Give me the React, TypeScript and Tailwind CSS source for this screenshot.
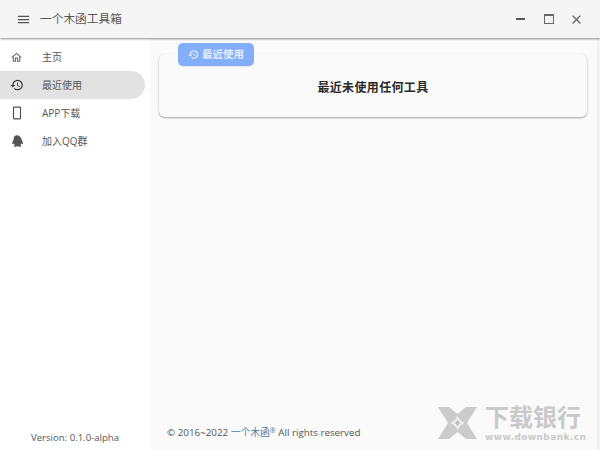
const font = { fontFamily: '"Open Sans", "Noto Sans CJK SC", sans-serif' };

function Icon({ d, size, color = "#555" }: { d: string; size: number; color?: string }) {
  return (
    <svg viewBox="0 0 24 24" width={size} height={size} fill={color}>
      <path d={d} />
    </svg>
  );
}

const HISTORY = "M13 3a9 9 0 0 0-9 9H1l3.890 3.890.07.14L9 12H6c0-3.870 3.130-7 7-7s7 3.130 7 7-3.130 7-7 7c-1.930 0-3.680-.79-4.940-2.060l-1.420 1.420A8.954 8.954 0 0 0 13 21a9 9 0 0 0 0-18zm-1 5v5l4.280 2.540.72-1.210-3.500-2.080V8H12z";
const HOME = "M12 5.690l5 4.500V18h-2v-6H9v6H7v-7.810l5-4.500M12 3L2 12h3v8h6v-6h2v6h6v-8h3L12 3z";
const PHONE = "M17 1.010L7 1c-1.100 0-2 .9-2 2v18c0 1.100.9 2 2 2h10c1.100 0 2-.9 2-2V3c0-1.100-.9-1.990-2-1.990zM17 21H7V3h10v18z";
const MENU = "M3 18h18v-2H3v2zm0-5h18v-2H3v2zm0-7v2h18V6H3z";
const CLOSE = "M19 6.410L17.590 5 12 10.590 6.410 5 5 6.410 10.590 12 5 17.590 6.410 19 12 13.410 17.590 19 19 17.590 13.410 12z";
const QQ = "M12 2c-3.600 0-5.800 2.800-5.800 6.200v1.700c-1 1.600-2.400 4-2.400 6 0 1.200.4 1.700.8 1.700.5 0 1.200-.8 1.700-1.700.3 1.300 1 2.400 1.900 3.200-1.100.4-2 .9-2 1.600 0 .8 1.600 1.300 3.500 1.300 1.200 0 2.200-.3 2.800-.8h1c.6.500 1.600.8 2.800.8 1.900 0 3.500-.5 3.500-1.300 0-.7-.9-1.200-2-1.600.9-.8 1.600-1.900 1.900-3.200.5.9 1.200 1.700 1.700 1.700.4 0 .8-.5.8-1.700 0-2-1.400-4.400-2.400-6V8.200C17.800 4.800 15.600 2 12 2z";

function Row({ icon, label, active }: { icon: React.ReactNode; label: string; active?: boolean }) {
  return (
    <div className={`flex h-[28px] w-[145px] items-center rounded-r-[14px] ${active ? "bg-[#e2e2e2]" : ""}`}>
      <div className="flex w-[33px] shrink-0 justify-center">{icon}</div>
      <span className="ml-[9px] text-[10px] leading-none text-[#555]">{label}</span>
    </div>
  );
}

export default function App() {
  return (
    <div className="relative flex h-[450px] w-[600px] flex-col overflow-hidden bg-white" style={font}>
      <header className="relative z-10 flex h-[38px] shrink-0 items-center bg-[#f5f5f5] shadow-[0_1px_2px_rgba(0,0,0,0.45)]">
        <div className="ml-[16px] flex">
          <Icon d={MENU} size={15} color="#555" />
        </div>
        <span className="ml-[9px] text-[11.7px] leading-none text-[#555]">一个木函工具箱</span>
        <div className="ml-auto flex items-center pr-[16px]">
          <div className="h-[2px] w-[9px] bg-[#555]" />
          <div className="ml-[19px] h-[10px] w-[10px] border border-t-[2px] border-[#666]" />
          <div className="ml-[15px] flex">
            <Icon d={CLOSE} size={15} color="#666" />
          </div>
        </div>
      </header>
      <div className="flex min-h-0 flex-1">
        <aside className="flex w-[150px] shrink-0 flex-col bg-white pt-[5px]">
          <Row icon={<Icon d={HOME} size={13} color="#666" />} label="主页" />
          <Row icon={<Icon d={HISTORY} size={14} color="#333" />} label="最近使用" active />
          <Row icon={<Icon d={PHONE} size={14} />} label="APP下载" />
          <Row icon={<Icon d={QQ} size={14} />} label="加入QQ群" />
          <div className="mt-auto pb-[5px] text-center text-[9.6px] leading-[14px] text-[#555]">Version: 0.1.0-alpha</div>
        </aside>
        <main className="flex min-w-0 flex-1 flex-col border-r-[3px] border-[#f2f2f2] bg-[#fafafa] pt-[16px] pr-[10px] pl-[9px]">
          <section className="relative flex h-[63px] items-center justify-center rounded-[6px] bg-[#fafafa] pt-[4px] shadow-[0_1px_2px_rgba(0,0,0,0.35),0_0_1px_rgba(0,0,0,0.1)]">
            <span className="text-[12px] font-bold leading-none tracking-[0.35px] text-[#2a2a2a]">最近未使用任何工具</span>
            <div className="absolute top-[-11px] left-[19px] flex h-[23px] w-[76px] items-center justify-center gap-[3px] rounded-[5px] bg-[#82aefc] shadow-[0_1px_1px_rgba(0,0,0,0.08)]">
              <Icon d={HISTORY} size={11} color="#fff" />
              <span className="text-[10.5px] font-bold leading-none text-[#e6efff]">最近使用</span>
            </div>
          </section>
          <footer className="mt-auto pb-[10px] pl-[8px] text-[9.8px] leading-[14px] text-[#555]">
            © 2016~2022 <span className="text-[#3f7fb5]">一个木函<sup className="text-[7px]">®</sup></span> All rights reserved
          </footer>
        </main>
      </div>
      <div className="absolute top-[407px] left-[438px] flex items-start gap-[8px] text-[#c9c9c9]">
        <svg width="39" height="32" viewBox="0 0 39 32" fill="#cbcbcb">
          <path d="M0 0h11l8.500 7 8.500-7h11L29 16l10 16H28l-8.500-7-8.500 7H0l10-16z" />
          <path d="M19.500 9l3 4.500 4 2.500-4 2.500-3 4.500-3-4.500-4-2.500 4-2.500z" fill="#eeeeee" />
          <path d="M19.500 13l2.500 3-2.500 3-2.500-3z" fill="#bdbdbd" />
        </svg>
        <div className="-mt-[2px] flex flex-col">
          <span className="text-[24px] font-bold leading-[24px]">下载银行</span>
          <span className="mt-[3px] text-[9px] font-bold leading-[10px] tracking-[0.4px]" style={{ fontFamily: '"DejaVu Sans", sans-serif' }}>www.downbank.cn</span>
        </div>
      </div>
    </div>
  );
}
